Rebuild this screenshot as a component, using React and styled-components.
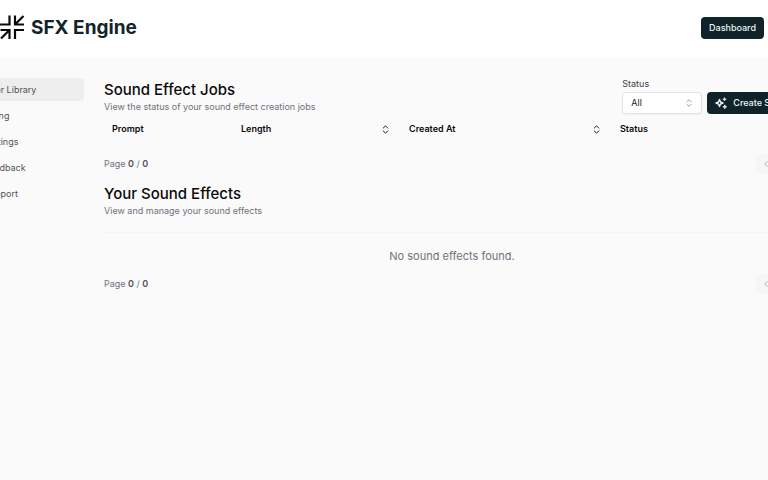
import React, { useState } from 'react'
import styled, { createGlobalStyle } from 'styled-components'
import { ChevronsUpDown, ChevronLeft, ChevronRight } from 'lucide-react'

const GlobalStyle = createGlobalStyle`
    *, *::before, *::after {
        box-sizing: border-box;
    }

    body {
        margin: 0;
        background-color: #fafafa;
        color: #0a0a0a;
        font-family: Inter, "Liberation Sans", sans-serif;
        font-size: 9px;
        line-height: 12px;
    }

    button, select {
        font: inherit;
        color: inherit;
    }

    h1, h2, p {
        margin: 0;
    }
`

const Page = styled.div`
    overflow-x: clip;
`

const Shell = styled.div`
    width: calc(100% + 64px);
    margin-left: -32px;
`

const Header = styled.header`
    display: flex;
    align-items: center;
    justify-content: space-between;
    padding: 15px 36px 18px 32px;
    background-color: #ffffff;
`

const Brand = styled.a`
    display: flex;
    align-items: center;
    gap: 6px;
    color: #10242b;
    font-size: 19px;
    font-weight: 700;
    line-height: 24px;
    text-decoration: none;
`

const Button = styled.button`
    display: flex;
    align-items: center;
    gap: 6px;
    height: 22px;
    padding: 0 8px;
    border: 0;
    border-radius: 4px;
    background-color: #0f2329;
    color: #ecf4f5;
    font-weight: 500;
    white-space: nowrap;
    cursor: pointer;
`

const Body = styled.div`
    display: flex;
    gap: 20px;
    padding-top: 20px;
`

const Sidebar = styled.nav`
    display: flex;
    flex-direction: column;
    flex: 0 0 116px;
    gap: 3px;
`

const NavLink = styled.a`
    padding: 6px 16px 5px;
    border-radius: 4px;
    background-color: ${({ $active }) => ($active ? '#eeeeee' : 'transparent')};
    color: #52525b;
    text-decoration: none;
`

const Main = styled.main`
    flex: 1;
    min-width: 0;
`

const SectionHead = styled.div`
    display: flex;
    align-items: flex-end;
    justify-content: space-between;
`

const Title = styled.h2`
    font-size: 15px;
    font-weight: 500;
    line-height: 20px;
`

const Description = styled.p`
    color: #71717a;
    line-height: 14px;
`

const Tools = styled.div`
    display: flex;
    align-items: flex-end;
    gap: 5px;
`

const Field = styled.div`
    display: flex;
    flex-direction: column;
    gap: 2px;
    color: #3f3f46;
`

const SelectBox = styled.div`
    position: relative;
    color: #18181b;

    svg {
        position: absolute;
        top: 6px;
        right: 8px;
        color: #8a8a8a;
        pointer-events: none;
    }
`

const Select = styled.select`
    appearance: none;
    width: 80px;
    height: 22px;
    padding: 0 8px;
    border: 1px solid #e4e4e7;
    border-radius: 4px;
    background-color: #ffffff;
    box-shadow: 0 1px 2px rgba(0, 0, 0, 0.05);
`

const Table = styled.table`
    width: 100%;
    margin-top: 4px;
    border-collapse: collapse;
    table-layout: fixed;
`

const HeadCell = styled.th`
    width: ${({ $width }) => $width};
    height: 22px;
    padding: 0 10px 0 8px;
    font-weight: 600;
    text-align: left;
`

const CellInner = styled.div`
    display: flex;
    align-items: center;
    justify-content: space-between;
`

const SortButton = styled.button`
    display: flex;
    padding: 0;
    border: 0;
    background: none;
    cursor: pointer;
`

const Pager = styled.div`
    display: flex;
    align-items: center;
    justify-content: space-between;
    margin-top: ${({ $gap }) => $gap};
    color: #71717a;

    b {
        color: #52525b;
        font-weight: 600;
    }
`

const PagerButtons = styled.div`
    display: flex;
    gap: 4px;
`

const PageButton = styled.button`
    display: flex;
    align-items: center;
    justify-content: center;
    width: 20px;
    height: 20px;
    padding: 0;
    border: 0;
    border-radius: 4px;
    background-color: #f6f6f6;
    color: #a1a1aa;
`

const Library = styled.section`
    margin-top: 10px;
`

const Divider = styled.hr`
    height: 1px;
    margin: 14px 0 0;
    border: 0;
    background-color: #f5f5f5;
`

const Empty = styled.p`
    padding-top: 15px;
    color: #71717a;
    font-size: 11px;
    line-height: 16px;
    text-align: center;
`

const links = ['User Library', 'Billing', 'Settings', 'Feedback', 'Support']

const columns = [
    { name: 'Prompt', width: '129px' },
    { name: 'Length', width: '168px', sortable: true },
    { name: 'Created At', width: '211px', sortable: true },
    { name: 'Status' },
]

const Logo = () => (
    <svg width="25" height="25" viewBox="0 0 25 25" fill="none" stroke="#0a0a0a" strokeWidth="2.2" aria-hidden="true">
        <path d="M9.5 0.5V9.5H0" />
        <path d="M15 0.5V9.5H24M15 9.5L23.5 1" />
        <path d="M0.5 15H9.5V24M9.5 15L1 23.5" />
        <path d="M24 15H15V24" />
    </svg>
)

const SparkIcon = () => (
    <svg width="12" height="12" viewBox="0 0 12 12" fill="none" stroke="currentColor" strokeWidth="1.4" strokeLinejoin="round" aria-hidden="true">
        <path d="M4.5 2.5L5.5 5L8 6L5.5 7L4.5 9.5L3.5 7L1 6L3.5 5Z" />
        <path d="M9.5 0.4L10 1.7L11.3 2.2L10 2.7L9.5 4L9 2.7L7.7 2.2L9 1.7Z" fill="currentColor" strokeWidth="0.5" />
        <path d="M9.8 7.9L10.3 9.3L11.7 9.8L10.3 10.3L9.8 11.7L9.3 10.3L7.9 9.8L9.3 9.3Z" fill="currentColor" strokeWidth="0.8" />
    </svg>
)

const Pagination = ({ gap }) => (
    <Pager $gap={gap}>
        <span>Page <b>0</b> / <b>0</b></span>
        <PagerButtons>
            <PageButton aria-label="Previous page" disabled><ChevronLeft size={10} /></PageButton>
            <PageButton aria-label="Next page" disabled><ChevronRight size={10} /></PageButton>
        </PagerButtons>
    </Pager>
)

const App = () => {
    const [status, setStatus] = useState('all')

    return (
        <Page>
            <GlobalStyle />
            <Shell>
                <Header>
                    <Brand href="#">
                        <Logo />
                        SFX Engine
                    </Brand>
                    <Button>Dashboard</Button>
                </Header>
                <Body>
                    <Sidebar>
                        {links.map((link, key) => (
                            <NavLink key={link} href="#" $active={key === 0}>{link}</NavLink>
                        ))}
                    </Sidebar>
                    <Main>
                        <section>
                            <SectionHead>
                                <div>
                                    <Title>Sound Effect Jobs</Title>
                                    <Description>View the status of your sound effect creation jobs</Description>
                                </div>
                                <Tools>
                                    <Field>
                                        <label htmlFor="status">Status</label>
                                        <SelectBox>
                                            <Select id="status" value={status} onChange={(e) => setStatus(e.target.value)}>
                                                <option value="all">All</option>
                                            </Select>
                                            <ChevronsUpDown size={10} />
                                        </SelectBox>
                                    </Field>
                                    <Button><SparkIcon />Create Sound</Button>
                                </Tools>
                            </SectionHead>
                            <Table>
                                <thead>
                                    <tr>
                                        {columns.map(({ name, width, sortable }) => (
                                            <HeadCell key={name} $width={width}>
                                                <CellInner>
                                                    {name}
                                                    {sortable && (
                                                        <SortButton aria-label={`Sort by ${name}`}>
                                                            <ChevronsUpDown size={11} />
                                                        </SortButton>
                                                    )}
                                                </CellInner>
                                            </HeadCell>
                                        ))}
                                    </tr>
                                </thead>
                            </Table>
                            <Pagination gap="14px" />
                        </section>
                        <Library>
                            <Title>Your Sound Effects</Title>
                            <Description>View and manage your sound effects</Description>
                            <Divider />
                            <Empty>No sound effects found.</Empty>
                            <Pagination gap="10px" />
                        </Library>
                    </Main>
                </Body>
            </Shell>
        </Page>
    )
}

export default App
